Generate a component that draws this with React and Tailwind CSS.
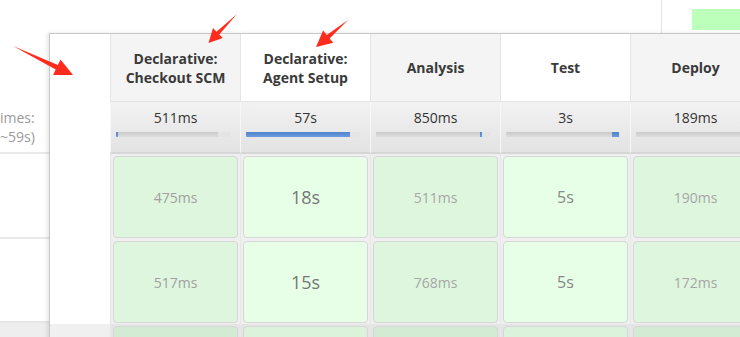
const stages = [
  {
    name: ['Declarative:', 'Checkout SCM'],
    avg: '511ms',
    gray: true,
    blue: [0, 2],
    light: [102, 12],
    cellA: 'bg-[#def6de]',
    cellB: 'bg-[#d3ebd3]',
    text: 'text-[14px] text-[#a0a0a0]',
    cells: ['475ms', '517ms', ''],
  },
  {
    name: ['Declarative:', 'Agent Setup'],
    avg: '57s',
    gray: false,
    blue: [0, 104],
    light: [104, 10],
    cellA: 'bg-[#e6ffe6]',
    cellB: 'bg-[#daf3da]',
    text: 'text-[18px] text-[#777777]',
    cells: ['18s', '15s', ''],
  },
  {
    name: ['Analysis'],
    avg: '850ms',
    gray: true,
    blue: [104, 2],
    light: [106, 8],
    cellA: 'bg-[#def6de]',
    cellB: 'bg-[#d3ebd3]',
    text: 'text-[14px] text-[#a6a6a6]',
    cells: ['511ms', '768ms', ''],
  },
  {
    name: ['Test'],
    avg: '3s',
    gray: false,
    blue: [106, 7],
    light: [113, 1],
    cellA: 'bg-[#e6ffe6]',
    cellB: 'bg-[#daf3da]',
    text: 'text-[16px] text-[#888888]',
    cells: ['5s', '5s', ''],
  },
  {
    name: ['Deploy'],
    avg: '189ms',
    gray: true,
    blue: [0, 0],
    light: [0, 0],
    cellA: 'bg-[#def6de]',
    cellB: 'bg-[#d3ebd3]',
    text: 'text-[14px] text-[#a6a6a6]',
    cells: ['190ms', '172ms', ''],
  },
];

function StageColumn({ st }) {
  return (
    <div className="w-[130px] shrink-0 flex flex-col">
      <div
        className={
          (st.gray ? 'bg-[#f4f4f4]' : 'bg-white') +
          ' h-[68px] border-l border-b border-[#e4e4e4] flex flex-col items-center justify-center text-center font-bold text-[14px] leading-[19px] text-[#3a3a3a]'
        }
      >
        {st.name.map((n) => (
          <div key={n}>{n}</div>
        ))}
      </div>
      <div className="h-[52px] border-l border-l-[#f7f7f7] border-b-2 border-b-[#d6d6d6] bg-gradient-to-b from-[#f2f2f2] to-[#e3e3e3] pt-[6px] flex flex-col">
        <div className="text-center text-[14px] leading-[20px] text-[#333333]">{st.avg}</div>
        <div className="relative mt-[4px] ml-[5px] w-[114px] h-[5px] rounded-[1px] bg-gradient-to-b from-[#c9c9c9] to-[#dedede] overflow-hidden">
          <div
            className="absolute top-0 h-full bg-[#e4e4e4]"
            style={{ left: st.light[0], width: st.light[1] }}
          />
          <div
            className="absolute top-0 h-full bg-gradient-to-b from-[#4f83cc] to-[#6b9ade]"
            style={{ left: st.blue[0], width: st.blue[1] }}
          />
        </div>
      </div>
      <div className="flex flex-col border-l border-[#e7e7e7]">
        {st.cells.map((c, i) => (
          <div
            key={i}
            className={(i === 2 ? 'bg-[#e5e5e5]' : 'bg-[#efefef]') + ' h-[85px] pt-[2px] pl-[2px]'}
          >
            <div
              className={
                (i === 2 ? st.cellB : st.cellA) +
                ' w-[125px] h-[82px] rounded-[4px] border border-[#d6d6d6] flex items-center justify-center ' +
                st.text
              }
            >
              {c}
            </div>
          </div>
        ))}
      </div>
    </div>
  );
}

export default function App() {
  return (
    <div className="relative w-[740px] h-[337px] overflow-hidden bg-white font-['Open_Sans',sans-serif]">
      {/* background page */}
      <div className="flex h-[33px]">
        <div className="w-[662px] shrink-0 h-full border-r border-[#e4e4e4]" />
        <div className="shrink-0 pl-[30px] pt-[9px]">
          <div className="w-[48px] h-[21px] bg-[#bbffbb]" />
        </div>
      </div>
      <div className="w-[49px] flex flex-col">
        <div className="h-[119px] pt-[75px] text-[14px] leading-[19px] text-[#9a9a9a] whitespace-nowrap">
          <div>imes:</div>
          <div>~59s)</div>
        </div>
        <div className="h-[2px] bg-[#e9e9e9]" />
        <div className="h-[83px]" />
        <div className="h-[2px] bg-[#e9e9e9]" />
        <div className="h-[82px]" />
        <div className="h-[2px] bg-[#e6e6e6]" />
        <div className="h-[20px] bg-[#eeeeee]" />
      </div>

      {/* stage view overlay */}
      <div className="absolute left-[49px] top-[33px] flex border-l border-t border-[#c8c8c8] bg-white shadow-[-2px_0_4px_rgba(0,0,0,0.10)]">
        <div className="w-[60px] shrink-0 flex flex-col">
          <div className="h-[290px] bg-white" />
          <div className="h-[85px] bg-[#f0f0f0]" />
        </div>
        {stages.map((st) => (
          <StageColumn key={st.name.join(' ')} st={st} />
        ))}
      </div>

      {/* annotation arrows */}
      <svg
        className="absolute left-0 top-0 pointer-events-none"
        width="740"
        height="337"
        viewBox="0 0 740 337"
      >
        <polygon
          fill="#ff2b1c"
          points="13,46 57.9,64.9 60.5,59.5 73,75 53.1,74.9 55.7,69.5"
        />
        <polygon
          fill="#ff2b1c"
          points="237,14 216.5,31.7 213,28.1 208.5,43 222.8,38 219.3,34.5"
        />
        <polygon
          fill="#ff2b1c"
          points="348,20 326.8,35 323.1,30.6 316,47 333.4,42.8 329.6,38.4"
        />
      </svg>
    </div>
  );
}
